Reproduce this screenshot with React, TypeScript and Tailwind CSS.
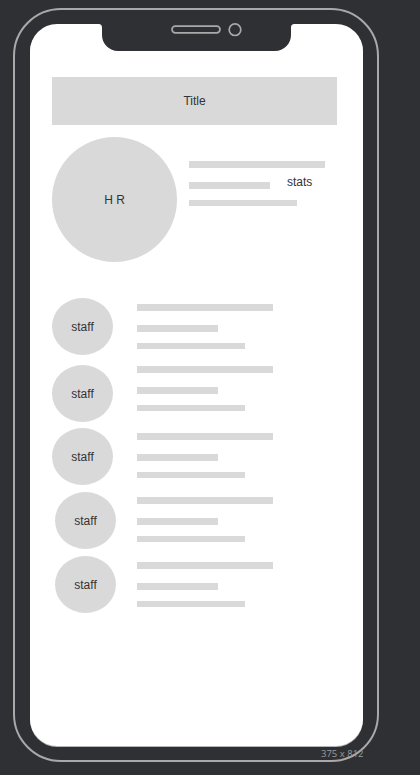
import React from 'react';

// wireframe gray used for every placeholder block
const block = 'bg-[#d9d9d9]';

const BarGroup = () => (
  <div className="flex flex-col">
    <div className={`h-[6.5px] w-[136px] ${block}`} />
    <div className={`mt-[14.5px] h-[6.5px] w-[81px] ${block}`} />
    <div className={`mt-[11px] h-[6.5px] w-[108px] ${block}`} />
  </div>
);

const staffRows = [
  { gap: 'mt-[36px]', barTop: 'mt-[6px]', shift: 'ml-0' },
  { gap: 'mt-[10px]', barTop: 'mt-[1px]', shift: 'ml-0' },
  { gap: 'mt-[6px]', barTop: 'mt-[5px]', shift: 'ml-0' },
  { gap: 'mt-[7px]', barTop: 'mt-[5px]', shift: 'ml-[3px]' },
  { gap: 'mt-[7px]', barTop: 'mt-[6px]', shift: 'ml-[3px]' },
];

const Notch = () => (
  <svg
    className="absolute left-[68px] top-[-4px]"
    width="197"
    height="32"
    viewBox="0 0 197 32"
  >
    <path
      d="M0 0 H197 V4 C194 4 193 5 193 8 V15 A16 16 0 0 1 177 31 H20 A16 16 0 0 1 4 15 V8 C4 5 3 4 0 4 Z"
      fill="#2f3034"
    />
    <rect x="74" y="6.2" width="48" height="6.6" rx="3.3" fill="none" stroke="#a9a9a9" strokeWidth="1.7" />
    <circle cx="137" cy="9.7" r="5.8" fill="none" stroke="#a9a9a9" strokeWidth="1.7" />
  </svg>
);

export default function App() {
  return (
    <div className="relative w-[420px] h-[775px] overflow-hidden bg-[#2f3034] font-['Liberation_Sans',Arial,sans-serif] text-[#333]">
      {/* phone body outline */}
      <div className="ml-[13px] mt-[8px] w-[366px] h-[754px] rounded-[48px] border-2 border-[#a9a9a9] pl-[15px] pt-[14px]">
        {/* screen */}
        <div className="relative w-[333px] h-[722px] rounded-[27px] bg-white shadow-[0_1px_0_#b5b5b5] pl-[22px] pt-[53px]">
          <Notch />

          <div className={`flex h-[48px] w-[285px] items-center justify-center text-[12px] ${block}`}>
            Title
          </div>

          {/* HR header */}
          <div className="mt-[12px] flex items-start">
            <div className={`flex h-[125px] w-[125px] items-center justify-center rounded-full text-[12px] ${block}`}>
              H R
            </div>
            <div className="ml-[12px] mt-[24px] flex flex-col">
              <div className={`h-[6.5px] w-[136px] ${block}`} />
              <div className="mt-[14.5px] flex items-start">
                <div className={`h-[6.5px] w-[81px] ${block}`} />
                <span className="-mt-[6px] ml-[17px] h-[6.5px] text-[12px] leading-[12px]">stats</span>
              </div>
              <div className={`mt-[11px] h-[6.5px] w-[108px] ${block}`} />
            </div>
          </div>

          {/* staff list */}
          {staffRows.map((row, i) => (
            <div key={i} className={`flex items-start ${row.gap}`}>
              <div className="w-[85px]">
                <div
                  className={`flex h-[57px] w-[61px] items-center justify-center rounded-[50%] text-[12px] ${block} ${row.shift}`}
                >
                  staff
                </div>
              </div>
              <div className={row.barTop}>
                <BarGroup />
              </div>
            </div>
          ))}
        </div>
      </div>

      <span className="absolute left-[321px] top-[748px] text-[9.5px] leading-[12px] text-[#9c9c9c] font-['Open_Sans',sans-serif]">
        375 x 812
      </span>
    </div>
  );
}
